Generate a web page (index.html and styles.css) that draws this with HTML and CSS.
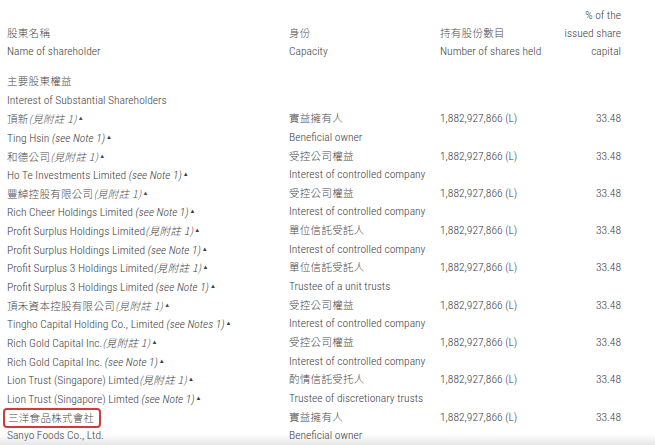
FILE: index.html
```html
<!DOCTYPE html>
<html lang="zh-Hant">
<head>
<meta charset="utf-8">
<link rel="stylesheet" href="styles.css">
</head>
<body>
<div class="page">
  <div class="table head">
    <div></div><div></div><div></div><div class="pct">% of the</div>
    <div class="zh">股東名稱</div><div class="zh">身份</div><div class="zh">持有股份數目</div><div class="pct">issued share</div>
    <div>Name of shareholder</div><div>Capacity</div><div>Number of shares held</div><div class="pct">capital</div>
  </div>
  <div class="table body">
    <div class="zh full">主要股東權益</div>
    <div class="full">Interest of Substantial Shareholders</div>

    <div class="zh">頂新<i>(見附註 1)</i><span class="tri">▲</span></div><div class="zh">實益擁有人</div><div>1,882,927,866 (L)</div><div class="pct">33.48</div>
    <div>Ting Hsin <i>(see Note 1)</i><span class="tri">▲</span></div><div>Beneficial owner</div><div></div><div></div>

    <div class="zh">和德公司<i>(見附註 1)</i><span class="tri">▲</span></div><div class="zh">受控公司權益</div><div>1,882,927,866 (L)</div><div class="pct">33.48</div>
    <div>Ho Te Investments Limited <i>(see Note 1)</i><span class="tri">▲</span></div><div>Interest of controlled company</div><div></div><div></div>

    <div class="zh">豐綽控股有限公司<i>(見附註 1)</i><span class="tri">▲</span></div><div class="zh">受控公司權益</div><div>1,882,927,866 (L)</div><div class="pct">33.48</div>
    <div>Rich Cheer Holdings Limited <i>(see Note 1)</i><span class="tri">▲</span></div><div>Interest of controlled company</div><div></div><div></div>

    <div>Profit Surplus Holdings Limited<i class="zhi">(見附註 1)</i><span class="tri">▲</span></div><div class="zh">單位信託受託人</div><div>1,882,927,866 (L)</div><div class="pct">33.48</div>
    <div>Profit Surplus Holdings Limited <i>(see Note 1)</i><span class="tri">▲</span></div><div>Interest of controlled company</div><div></div><div></div>

    <div>Profit Surplus 3 Holdings Limited<i class="zhi">(見附註 1)</i><span class="tri">▲</span></div><div class="zh">單位信託受託人</div><div>1,882,927,866 (L)</div><div class="pct">33.48</div>
    <div>Profit Surplus 3 Holdings Limited <i>(see Note 1)</i><span class="tri">▲</span></div><div>Trustee of a unit trusts</div><div></div><div></div>

    <div class="zh">頂禾資本控股有限公司<i>(見附註 1)</i><span class="tri">▲</span></div><div class="zh">受控公司權益</div><div>1,882,927,866 (L)</div><div class="pct">33.48</div>
    <div>Tingho Capital Holding Co., Limited <i>(see Notes 1)</i><span class="tri">▲</span></div><div>Interest of controlled company</div><div></div><div></div>

    <div>Rich Gold Capital Inc.<i class="zhi">(見附註 1)</i><span class="tri">▲</span></div><div class="zh">受控公司權益</div><div>1,882,927,866 (L)</div><div class="pct">33.48</div>
    <div>Rich Gold Capital Inc. <i>(see Note 1)</i><span class="tri">▲</span></div><div>Interest of controlled company</div><div></div><div></div>

    <div>Lion Trust (Singapore) Limted<i class="zhi">(見附註 1)</i><span class="tri">▲</span></div><div class="zh">酌情信託受托人</div><div>1,882,927,866 (L)</div><div class="pct">33.48</div>
    <div>Lion Trust (Singapore) Limted <i>(see Note 1)</i><span class="tri">▲</span></div><div>Trustee of discretionary trusts</div><div></div><div></div>

    <div class="zh"><span class="mark">三洋食品株式會社</span></div><div class="zh">實益擁有人</div><div>1,882,927,866 (L)</div><div class="pct">33.48</div>
    <div>Sanyo Foods Co., Ltd.</div><div>Beneficial owner</div><div></div><div></div>
  </div>
</div>
</body>
</html>
```
FILE: styles.css
```css
html, body {
  margin: 0;
  padding: 0;
}
body {
  width: 655px;
  height: 445px;
  overflow: hidden;
  background: linear-gradient(to bottom, #ffffff 0, #ffffff 97.5%, #e6e6e6 100%);
  font-family: "Roboto Condensed", "Liberation Sans Narrow", "Liberation Sans", "Noto Sans CJK TC", sans-serif;
  font-size: 11.5px;
  font-weight: 300;
  color: #3c3c3c;
}
.page {
  padding: 6px 0 0 7px;
}
.table {
  display: grid;
  grid-template-columns: 282px 151px 120px 61px;
  grid-auto-rows: 18.65px;
  line-height: 18.65px;
  width: 614px;
  white-space: nowrap;
}
.head {
  grid-auto-rows: 18px;
  line-height: 18px;
}
.body {
  margin-top: 12px;
}
.full {
  grid-column: 1 / -1;
}
.pct {
  text-align: right;
}
.zh {
  font-family: "Noto Sans CJK TC", sans-serif;
  font-size: 10.5px;
  letter-spacing: 0.3px;
  font-weight: 300;
  color: #4a4a4a;
}
i {
  font-style: italic;
}
.zh i, .zhi {
  font-family: "Noto Sans CJK TC", sans-serif;
  font-size: 10.5px;
  letter-spacing: 0.3px;
  font-weight: 300;
}
.tri {
  font-size: 6px;
  vertical-align: 3px;
  margin-left: 1px;
  font-family: "DejaVu Sans", sans-serif;
  font-style: normal;
}
.mark {
  display: inline-block;
  line-height: 16px;
  padding: 0 5px 0 3px;
  margin-left: -4px;
  border: 2px solid #d03a3e;
  border-radius: 4px;
}
```
